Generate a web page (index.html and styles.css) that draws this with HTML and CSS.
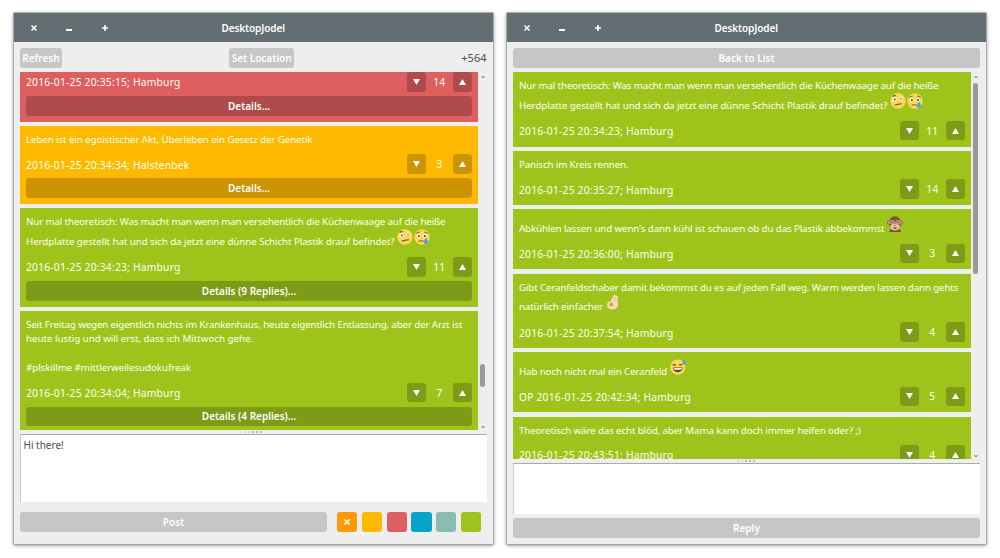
FILE: index.html
```html
<!DOCTYPE html>
<html lang="de">
<head>
<meta charset="utf-8">
<title>DesktopJodel</title>
<link rel="stylesheet" href="styles.css">
</head>
<body>
<svg class="defs" width="0" height="0">
  <symbol id="down" viewBox="0 0 7 6"><path d="M0 0H7L3.5 6Z" fill="#fff"/></symbol>
  <symbol id="up" viewBox="0 0 7 6"><path d="M0 6H7L3.5 0Z" fill="#fff"/></symbol>
  <symbol id="x" viewBox="0 0 6 6"><path d="M.5 .5L5.5 5.5M5.5 .5L.5 5.5" stroke="#fff" stroke-width="1.5"/></symbol>
  <symbol id="min" viewBox="0 0 6 6"><path d="M0 5H6" stroke="#fff" stroke-width="2"/></symbol>
  <symbol id="max" viewBox="0 0 6 6"><path d="M0 3H6M3 0V6" stroke="#fff" stroke-width="1.6"/></symbol>
  <symbol id="chev-up" viewBox="0 0 4 4"><path d="M.5 3L2 1L3.5 3" fill="none" stroke="#777" stroke-width="1"/></symbol>
  <symbol id="chev-down" viewBox="0 0 4 4"><path d="M.5 1L2 3L3.5 1" fill="none" stroke="#777" stroke-width="1"/></symbol>
  <symbol id="confused" viewBox="0 0 16 16">
    <circle cx="8" cy="8" r="7.7" fill="#fcd954"/>
    <circle cx="4.6" cy="6.4" r="2.1" fill="#fff"/><circle cx="11" cy="5.8" r="1.8" fill="#fff"/>
    <circle cx="4.8" cy="6.5" r=".9" fill="#553b2b"/><circle cx="11" cy="5.8" r=".8" fill="#553b2b"/>
    <path d="M3 3.2Q4 2.4 5.5 2.7M5 12L7.5 11.4L11.5 10.8" fill="none" stroke="#795523" stroke-width="1.1" stroke-linecap="round"/>
  </symbol>
  <symbol id="cry" viewBox="0 0 16 16">
    <circle cx="8" cy="8" r="7.7" fill="#fcd954"/>
    <circle cx="4.8" cy="6.8" r="2" fill="#fff"/><circle cx="11" cy="6.8" r="2" fill="#fff"/>
    <circle cx="4.9" cy="7" r="1" fill="#553b2b"/><circle cx="10.9" cy="7" r="1" fill="#553b2b"/>
    <path d="M2.4 4.3Q3.6 3 5.4 3M10.5 3Q12.3 3 13.5 4.3M5 12.2Q7.2 10.9 9.5 12.2" fill="none" stroke="#795523" stroke-width="1" stroke-linecap="round"/>
    <path d="M11.8 8.5Q14 11.5 14 13A2.1 2.1 0 0 1 9.8 13Q9.8 11.5 11.8 8.5Z" fill="#4a9fe8"/>
  </symbol>
  <symbol id="sweat" viewBox="0 0 16 16">
    <circle cx="7.8" cy="8.2" r="7.6" fill="#fcd954"/>
    <path d="M2.6 6.2Q4.2 4.9 6 6.3M8.9 6.3Q10.4 4.9 12 6.2" fill="none" stroke="#6b4a23" stroke-width="1.1"/>
    <path d="M3 8.6H12.6Q12.2 13.2 7.8 13.2Q3.4 13.2 3 8.6Z" fill="#5b4030"/>
    <path d="M3.8 9.1H11.8L11.3 10.8H4.3Z" fill="#fff"/>
    <path d="M13.5 0Q16 3 15.8 4.3Q15.4 6 13.7 5.8Q12.1 5.5 12.3 4Z" fill="#4a9fe8"/>
  </symbol>
  <symbol id="monkey" viewBox="0 0 16 16">
    <circle cx="1.9" cy="6.5" r="2.1" fill="#8a6350"/><circle cx="14.1" cy="6.5" r="2.1" fill="#8a6350"/>
    <circle cx="1.9" cy="6.5" r="1.1" fill="#e8c39b"/><circle cx="14.1" cy="6.5" r="1.1" fill="#e8c39b"/>
    <path d="M8 .3Q14 .8 13.8 7Q14 11 12.5 12.6L14 16H2L3.5 12.6Q2 11 2.2 7Q2 .8 8 .3Z" fill="#7b5542"/>
    <path d="M3.8 9Q8 6 12.2 9Q14 12 11.3 13.6Q8 15.4 4.7 13.6Q2 12 3.8 9Z" fill="#e8c39b"/>
    <ellipse cx="5" cy="6.3" rx="2.7" ry="2.2" fill="#c39a78"/><ellipse cx="11" cy="6.3" rx="2.7" ry="2.2" fill="#c39a78"/>
    <path d="M3.6 6.2H6.4M9.6 6.2H12.4M7.3 9.6H8.7" stroke="#6a4636" stroke-width=".8"/>
    <ellipse cx="8" cy="12" rx="2" ry=".8" fill="#704434"/>
  </symbol>
  <symbol id="ok" viewBox="0 0 16 16">
    <path d="M6 7.2Q6.6 3.5 8 2.4L8.6 1.4Q9.2 .1 10.4 .9L10.6 2L11.3 1.6Q12.6 1.2 12.8 2.6Q12.2 6 13 9Q13.4 15 7.8 15.6Q2.8 15.8 2 11.6Q1.9 7.3 6 7.2Z" fill="#fadcbc"/>
    <ellipse cx="6.3" cy="10.6" rx="2" ry="1.8" fill="#9ec41b" stroke="#e4b08b" stroke-width=".7"/>
    <path d="M8.4 3.5L9.2 7.5M10.5 2.5L10.8 8" fill="none" stroke="#e4b08b" stroke-width=".6"/>
  </symbol>
</svg>
<main class="desktop">
  <section class="window">
    <header class="titlebar">
      <svg class="ctl"><use href="#x"/></svg><svg class="ctl"><use href="#min"/></svg><svg class="ctl"><use href="#max"/></svg>
      <h1 class="title">DesktopJodel</h1>
    </header>
    <div class="toolbar">
      <button class="btn">Refresh</button>
      <button class="btn location">Set Location</button>
      <span class="karma">+564</span>
    </div>
    <div class="feed main-feed">
      <div class="cards">
        <article class="card red">
          <div class="foot"><span class="date">2016-01-25 20:35:15; Hamburg</span><button class="vote"><svg><use href="#down"/></svg></button><span class="score">14</span><button class="vote"><svg><use href="#up"/></svg></button></div>
          <button class="details">Details...</button>
        </article>
        <article class="card yellow">
          <div class="text one"><p class="mid">Leben ist ein egoistischer Akt, Überleben ein Gesetz der Genetik</p></div>
          <div class="foot"><span class="date">2016-01-25 20:34:34; Halstenbek</span><button class="vote"><svg><use href="#down"/></svg></button><span class="score">3</span><button class="vote"><svg><use href="#up"/></svg></button></div>
          <button class="details">Details...</button>
        </article>
        <article class="card green">
          <div class="text two"><p>Nur mal theoretisch: Was macht man wenn man versehentlich die Küchenwaage auf die heiße</p><p class="loose">Herdplatte gestellt hat und sich da jetzt eine dünne Schicht Plastik drauf befindet? <svg class="emoji"><use href="#confused"/></svg><svg class="emoji"><use href="#cry"/></svg></p></div>
          <div class="foot"><span class="date">2016-01-25 20:34:23; Hamburg</span><button class="vote"><svg><use href="#down"/></svg></button><span class="score">11</span><button class="vote"><svg><use href="#up"/></svg></button></div>
          <button class="details">Details (9 Replies)...</button>
        </article>
        <article class="card green">
          <div class="text four"><p>Seit Freitag wegen eigentlich nichts im Krankenhaus, heute eigentlich Entlassung, aber der Arzt ist</p><p class="loosest">heute lustig und will erst, dass ich Mittwoch gehe.</p><p class="loose tags">#plskillme #mittlerweilesudokufreak</p></div>
          <div class="foot"><span class="date">2016-01-25 20:34:04; Hamburg</span><button class="vote"><svg><use href="#down"/></svg></button><span class="score">7</span><button class="vote"><svg><use href="#up"/></svg></button></div>
          <button class="details">Details (4 Replies)...</button>
        </article>
      </div>
      <div class="scroll"><svg class="chev"><use href="#chev-up"/></svg><div class="track"><i class="thumb low"></i></div><svg class="chev"><use href="#chev-down"/></svg></div>
    </div>
    <div class="sash"><i></i><i></i><i></i><i></i><i></i></div>
    <div class="entry main-entry">Hi there!</div>
    <div class="postbar">
      <button class="btn post">Post</button>
      <div class="swatches"><button class="sw orange"><svg class="ctl"><use href="#x"/></svg></button><button class="sw yellow"></button><button class="sw red"></button><button class="sw blue"></button><button class="sw teal"></button><button class="sw green"></button></div>
    </div>
  </section>

  <section class="window">
    <header class="titlebar">
      <svg class="ctl"><use href="#x"/></svg><svg class="ctl"><use href="#min"/></svg><svg class="ctl"><use href="#max"/></svg>
      <h1 class="title">DesktopJodel</h1>
    </header>
    <div class="toolbar"><button class="btn wide">Back to List</button></div>
    <div class="feed thread-feed">
      <div class="cards">
        <article class="card green">
          <div class="text two"><p>Nur mal theoretisch: Was macht man wenn man versehentlich die Küchenwaage auf die heiße</p><p class="loose">Herdplatte gestellt hat und sich da jetzt eine dünne Schicht Plastik drauf befindet? <svg class="emoji"><use href="#confused"/></svg><svg class="emoji"><use href="#cry"/></svg></p></div>
          <div class="foot"><span class="date">2016-01-25 20:34:23; Hamburg</span><button class="vote"><svg><use href="#down"/></svg></button><span class="score">11</span><button class="vote"><svg><use href="#up"/></svg></button></div>
        </article>
        <article class="card green">
          <div class="text one"><p>Panisch im Kreis rennen.</p></div>
          <div class="foot"><span class="date">2016-01-25 20:35:27; Hamburg</span><button class="vote"><svg><use href="#down"/></svg></button><span class="score">14</span><button class="vote"><svg><use href="#up"/></svg></button></div>
        </article>
        <article class="card green">
          <div class="text tall"><p>Abkühlen lassen und wenn's dann kühl ist schauen ob du das Plastik abbekommst <svg class="emoji"><use href="#monkey"/></svg></p></div>
          <div class="foot"><span class="date">2016-01-25 20:36:00; Hamburg</span><button class="vote"><svg><use href="#down"/></svg></button><span class="score">3</span><button class="vote"><svg><use href="#up"/></svg></button></div>
        </article>
        <article class="card green">
          <div class="text two"><p>Gibt Ceranfeldschaber damit bekommst du es auf jeden Fall weg. Warm werden lassen dann gehts</p><p>natürlich einfacher <svg class="emoji"><use href="#ok"/></svg></p></div>
          <div class="foot"><span class="date">2016-01-25 20:37:54; Hamburg</span><button class="vote"><svg><use href="#down"/></svg></button><span class="score">4</span><button class="vote"><svg><use href="#up"/></svg></button></div>
        </article>
        <article class="card green">
          <div class="text tall"><p>Hab noch nicht mal ein Ceranfeld <svg class="emoji"><use href="#sweat"/></svg></p></div>
          <div class="foot"><span class="date">OP 2016-01-25 20:42:34; Hamburg</span><button class="vote"><svg><use href="#down"/></svg></button><span class="score">5</span><button class="vote"><svg><use href="#up"/></svg></button></div>
        </article>
        <article class="card green">
          <div class="text one"><p>Theoretisch wäre das echt blöd, aber Mama kann doch immer helfen oder? ;)</p></div>
          <div class="foot"><span class="date">2016-01-25 20:43:51; Hamburg</span><button class="vote"><svg><use href="#down"/></svg></button><span class="score">4</span><button class="vote"><svg><use href="#up"/></svg></button></div>
        </article>
      </div>
      <div class="scroll"><svg class="chev"><use href="#chev-up"/></svg><div class="track"><i class="thumb high"></i></div><svg class="chev"><use href="#chev-down"/></svg></div>
    </div>
    <div class="sash"><i></i><i></i><i></i><i></i><i></i></div>
    <div class="entry thread-entry"></div>
    <button class="btn wide reply">Reply</button>
  </section>
</main>
</body>
</html>
```
FILE: styles.css
```css
* { box-sizing: border-box; }
body { margin: 0; background: #fff; font: 10.3px/14px "Noto Sans", sans-serif; }
button { border: 0; padding: 0; font: inherit; color: #fff; }
p, h1 { margin: 0; }
.defs { position: absolute; }
.desktop { display: flex; gap: 13.7px; height: 558px; padding: 13px 0 0 13.6px; overflow: hidden; }
.window { width: 479.3px; height: 531px; display: flex; flex-direction: column; background: #eee; box-shadow: 0 0 0 .7px #a0a0a0, 0 1px 4px rgba(0,0,0,.6); }
.titlebar { height: 29px; flex: none; background: #636e72; display: flex; align-items: center; gap: 29.5px; padding-left: 17px; position: relative; }
.ctl { width: 6px; height: 6px; display: block; }
.title { position: absolute; left: 0; right: 0; text-align: center; color: #fff; font-size: 10px; font-weight: 600; letter-spacing: -.1px; }
.toolbar { margin: 6px 6.4px 4px; height: 20px; flex: none; display: flex; justify-content: space-between; align-items: center; }
.karma { color: #4e4e4e; font-size: 11px; }
.btn { height: 20px; border-radius: 3px; background: #c6c6c6; font-size: 10px; font-weight: 600; width: 42px; flex: none; white-space: nowrap; }
.location { width: 65px; }
.wide { width: 467px; }
.feed { display: flex; flex: none; margin-left: 6.4px; width: 467.5px; overflow: hidden; }
.main-feed { height: 358px; }
.thread-feed { height: 387px; }
.cards { width: 458px; display: flex; flex-direction: column; gap: 4.2px; }
.card { flex: none; padding: 0 6px 6px; color: #fffff0; }
.red { background: #dd5f5f; }
.yellow { background: #ffba00; }
.green { background: #9ec41c; }
.orange { background: #ff9908; }
.blue { background: #06a3cb; }
.teal { background: #8abdb0; }
.text { display: flex; flex-direction: column; padding-top: 7px; font-size: 9.8px; letter-spacing: -.15px; }
.text p { height: 14px; line-height: 14px; white-space: pre; }
.text .mid { letter-spacing: -.12px; }
.text .loose { letter-spacing: -.09px; }
.text .loosest { letter-spacing: -.04px; }
.one { height: 28.4px; }
.two { height: 48.7px; }
.two p + p { margin-top: 5.7px; }
.tall { height: 34.2px; padding-top: 12.5px; }
.four { height: 72px; }
.text.four p { height: 14.3px; }
.four .tags { margin-top: 14.3px; }
.emoji { width: 16px; height: 16px; vertical-align: 0; margin: -6px .7px 0 0; overflow: visible; }
.foot { height: 19.9px; display: flex; align-items: center; }
.date { flex: 1; white-space: nowrap; letter-spacing: .2px; padding-top: .8px; }
.vote { width: 19px; height: 19.6px; border-radius: 3px; display: flex; align-items: center; justify-content: center; background: #7d9b17; }
.vote svg { width: 7px; height: 6px; }
.score { width: 27.3px; text-align: center; letter-spacing: .2px; }
.details { display: block; width: 446px; height: 19.8px; margin-top: 4px; border-radius: 3px; background: #7d9b17; font-size: 10px; font-weight: 600; }
.yellow .vote, .yellow .details { background: #cb9400; }
.red .vote, .red .details { background: #b04b4b; }
.scroll { width: 9.5px; padding: 3px 0 1px; display: flex; flex-direction: column; align-items: center; }
.chev { width: 4px; height: 4px; flex: none; }
.track { flex: 1; width: 5px; display: flex; flex-direction: column; }
.thumb { width: 5px; border-radius: 3px; background: #999; }
.low { height: 23px; margin-top: 285px; }
.high { height: 191px; margin-top: 4px; }
.sash { height: 4px; flex: none; display: flex; justify-content: center; align-items: center; gap: 2.3px; }
.sash i { width: 1.5px; height: 1.5px; background: #bbb; }
.entry { margin: 0 6.2px 0 6.4px; flex: none; background: #fff; border-top: 1px solid #aaa; border-left: 1px solid #ccc; color: #4e4e4e; padding: 3px 2.5px; font-size: 10px; }
.main-entry { height: 68px; }
.thread-entry { height: 51px; }
.postbar { margin: 10px 12px 0 6.4px; display: flex; justify-content: space-between; }
.post { width: 307px; }
.swatches { display: flex; gap: 4.5px; }
.sw { width: 20.2px; height: 20px; border-radius: 3px; display: flex; align-items: center; justify-content: center; }
.reply { margin: 4px 6.4px 0; }
```
